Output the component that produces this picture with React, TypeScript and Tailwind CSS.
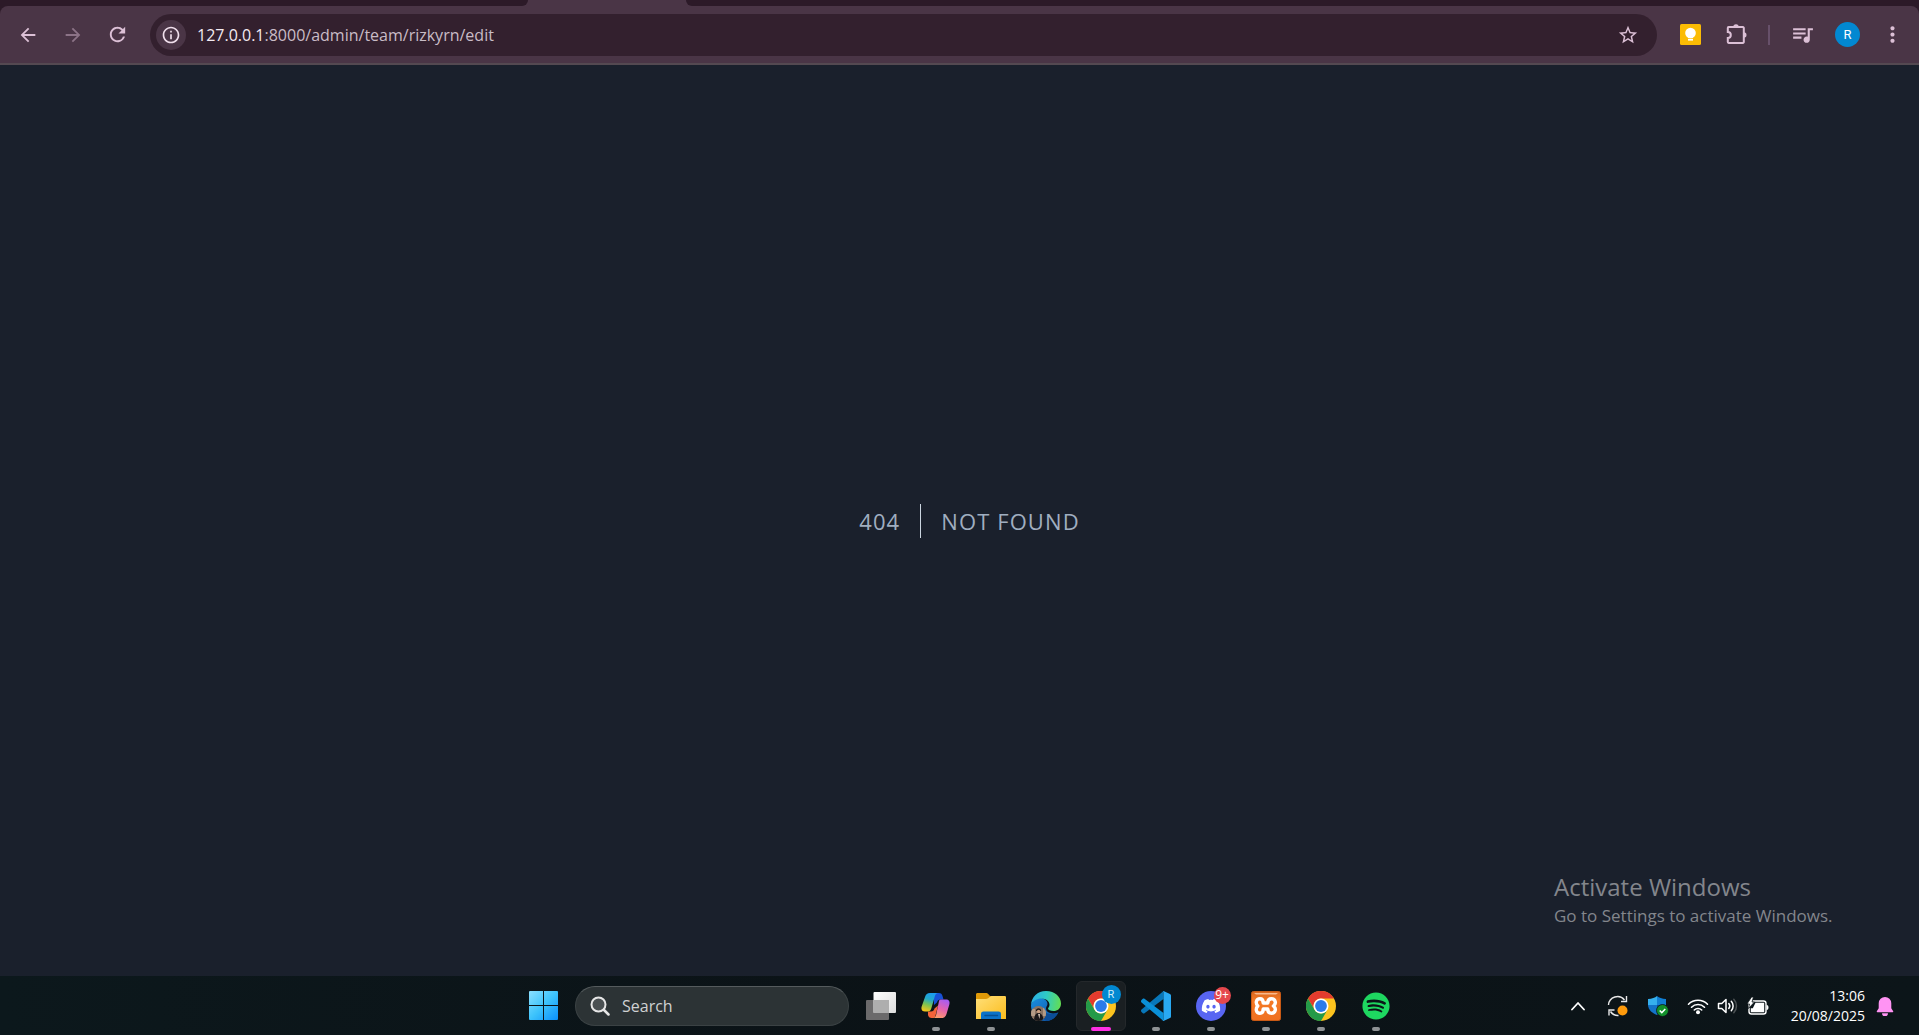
import type { ReactNode } from "react";
import { MdArrowBack, MdArrowForward, MdRefresh, MdStarBorder, MdInfoOutline, MdQueueMusic, MdMoreVert } from "react-icons/md";
import { FaDiscord, FaSpotify } from "react-icons/fa";

function TabStrip() {
  return (
    <div className="flex h-[6px] bg-[#4a3546]" aria-hidden="true">
      <div className="w-[528px] rounded-br-lg bg-[#2c1a28]" />
      <div className="w-[158px]" />
      <div className="flex-1 rounded-bl-lg bg-[#2c1a28]" />
    </div>
  );
}

function ToolButton({ label, children }: { label: string; children: ReactNode }) {
  return (
    <button type="button" aria-label={label} className="flex size-[37px] items-center justify-center rounded-full text-[#dcc0d6]">
      {children}
    </button>
  );
}

function KeepIcon() {
  return (
    <svg className="size-[21px]" viewBox="0 0 21 21">
      <rect width="21" height="21" rx="1.5" fill="#fbbc04" />
      <circle cx="10.5" cy="9" r="5.3" fill="#fff" />
      <rect x="8" y="12" width="5" height="2" fill="#fff" />
      <rect x="8" y="14.8" width="5" height="1.8" fill="#fff" />
    </svg>
  );
}

function PuzzleIcon() {
  return (
    <svg className="size-[23px]" viewBox="0 0 23 23" fill="none">
      <path
        d="M3.6 4.1H18a.8.8 0 0 1 .8.8v14.2a.8.8 0 0 1-.8.8H3.6a.8.8 0 0 1-.8-.8V15a3 3 0 0 0 0-6V4.900a.8.8 0 0 1 .8-.8Z"
        stroke="currentColor"
        strokeWidth="2"
      />
      <path d="M8.300 4a2.700 2.700 0 0 1 5.400 0ZM18.800 9.300a2.700 2.700 0 0 1 0 5.400Z" fill="currentColor" />
    </svg>
  );
}

function BrowserToolbar() {
  return (
    <div className="bg-[#2c1a28]">
      <nav aria-label="Browser toolbar" className="flex h-[59px] items-center rounded-t-lg border-b-2 border-[#544951] bg-[#4a3546] pr-2 pl-[9px]">
        <div className="flex w-[141px] items-center gap-2">
          <ToolButton label="Back"><MdArrowBack size={22} /></ToolButton>
          <button type="button" disabled aria-label="Forward" className="flex size-[37px] items-center justify-center text-[#8c7387]">
            <MdArrowForward size={22} />
          </button>
          <ToolButton label="Reload"><MdRefresh size={23} /></ToolButton>
        </div>
        <div className="flex h-[42px] flex-1 items-center rounded-full bg-[#33202e] pl-[6px] pr-[11px]">
          <button type="button" aria-label="View site information" className="flex size-[30px] items-center justify-center rounded-full bg-[#4a3546] text-[#f0dfec]">
            <MdInfoOutline size={20} />
          </button>
          <p className="ml-[11px] flex-1 text-[16px] text-[#c9bcc6]">
            <span className="text-[#f3eaf1]">127.0.0.1</span>:8000/admin/team/rizkyrn/edit
          </p>
          <ToolButton label="Bookmark this tab"><MdStarBorder size={22} /></ToolButton>
        </div>
        <div className="flex items-center pl-[15px]">
          <ToolButton label="Google Keep"><KeepIcon /></ToolButton>
          <div className="ml-[9px]"><ToolButton label="Extensions"><PuzzleIcon /></ToolButton></div>
          <span className="ml-[13px] mr-[14px] h-5 w-[2px] bg-[#67506a]" />
          <ToolButton label="Media controls"><MdQueueMusic size={25} /></ToolButton>
          <button type="button" aria-label="Profile" className="mx-[14px] size-[25px] rounded-full bg-[#0288d1] text-center font-[Roboto] text-[13px] leading-[25px] text-white">
            R
          </button>
          <ToolButton label="Menu"><MdMoreVert size={25} /></ToolButton>
        </div>
      </nav>
    </div>
  );
}

function ErrorPage() {
  return (
    <main className="relative flex flex-1 items-center justify-center bg-[#1a202c]">
      <h1 className="flex items-center text-[22px] leading-[34px] text-[#a0aec0]">
        <span className="border-r border-[#cbd5e0] px-5 tracking-wider">404</span>
        <span className="ml-5 tracking-wider">NOT FOUND</span>
      </h1>
      <aside className="absolute right-[80px] bottom-12 w-[285px] text-[#83868c]">
        <p className="text-[24px] leading-[34px]">Activate Windows</p>
        <p className="text-[17px] leading-6">Go to Settings to activate Windows.</p>
      </aside>
    </main>
  );
}

function WindowsLogo() {
  return (
    <svg className="size-[29px]" viewBox="0 0 29 29">
      <defs>
        <linearGradient id="win" x1="0" y1="0" x2="29" y2="29" gradientUnits="userSpaceOnUse">
          <stop stopColor="#8be0ff" />
          <stop offset=".5" stopColor="#3dc3fb" />
          <stop offset="1" stopColor="#0a8ffb" />
        </linearGradient>
      </defs>
      <path fill="url(#win)" d="M1 0h13v14H0V1a1 1 0 0 1 1-1Zm14 0h13a1 1 0 0 1 1 1v13H15V0ZM0 15h14v14H1a1 1 0 0 1-1-1V15Zm15 0h14v13a1 1 0 0 1-1 1H15V15Z" />
    </svg>
  );
}

function TaskViewIcon() {
  return (
    <svg className="size-[30px]" viewBox="0 0 30 30">
      <defs>
        <linearGradient id="tv" x1="0" y1="0" x2="1" y2="1">
          <stop stopColor="#fff" />
          <stop offset="1" stopColor="#dcdcdc" />
        </linearGradient>
      </defs>
      <rect y="9" width="23" height="20" rx="1" fill="#6b6a6b" />
      <rect x="7.500" y="1" width="22.500" height="21" rx="1" fill="url(#tv)" />
      <path d="M7.500 9H23v13H7.500z" fill="#aeaeae" />
    </svg>
  );
}

function CopilotIcon() {
  return (
    <svg className="size-[30px]" viewBox="0 0 30 30">
      <defs>
        <linearGradient id="cpa" x1=".6" y1="0" x2=".3" y2="1">
          <stop stopColor="#1b9bf0" />
          <stop offset=".35" stopColor="#23a9c9" />
          <stop offset=".65" stopColor="#7cc251" />
          <stop offset="1" stopColor="#f5c518" />
        </linearGradient>
        <linearGradient id="cpb" x1=".7" y1="0" x2=".3" y2="1">
          <stop stopColor="#a75cf2" />
          <stop offset=".5" stopColor="#e463ae" />
          <stop offset="1" stopColor="#ff9b68" />
        </linearGradient>
      </defs>
      <path fill="#1850d6" d="M13 2h5c2 0 3 1 3.500 3l1 3.500h-3c-2 0-3 1-3.600 3L13 14Z" />
      <path fill="#f4633a" d="M7 20.500h3c2 0 3-1 3.500-3l3.500-3-2.500 10c-.5 2-1.500 2.500-3 2.500h-1c-2 0-3-1-3.500-3Z" />
      <path fill="url(#cpa)" d="M9 2h8.500c-2 0-3 1-3.600 3l-3.600 12.500c-.6 2-1.600 3-3.500 3H4c-2.800 0-4.100-2-3.400-4.700L4 6c.8-2.700 2.300-4 5-4Z" />
      <path fill="url(#cpb)" d="M19.500 8.500H25c2.800 0 4.100 2 3.400 4.700L25.500 23c-.8 2.700-2.300 4-5 4h-9c2 0 3-1 3.600-3l2.600-12.500c.4-2 .6-3 1.800-3Z" />
    </svg>
  );
}

function FolderIcon() {
  return (
    <svg className="size-[30px]" viewBox="0 0 30 30">
      <defs>
        <linearGradient id="fo" x1="0" y1="0" x2="1" y2="1">
          <stop stopColor="#ffe07a" />
          <stop offset="1" stopColor="#fcbc1c" />
        </linearGradient>
      </defs>
      <path fill="#e09a08" d="M0 3.500C0 2.500.7 2 1.500 2H10c1 0 1.500.3 2 .8L14 5h14c1.300 0 2 .7 2 2v5H0Z" />
      <path fill="url(#fo)" d="M0 8h10c1.500 0 2-.5 2.800-1.200S14.500 5 16 5h12.500c1 0 1.500.6 1.500 1.500V28H0Z" />
      <path fill="#0b72c9" d="M5 28v-5c0-1.700 1-2.500 2.500-2.500h15c1.500 0 2.500.8 2.500 2.500v5Z" />
      <path d="M9 24.500h12.500" stroke="#074f94" strokeWidth="1.500" strokeLinecap="round" />
    </svg>
  );
}

function EdgeIcon() {
  return (
    <svg className="size-[30px]" viewBox="0 0 30 30">
      <defs>
        <linearGradient id="ea" x1="0" y1=".3" x2="1" y2=".4">
          <stop stopColor="#2aaee6" />
          <stop offset=".5" stopColor="#2fcbc5" />
          <stop offset="1" stopColor="#62dd56" />
        </linearGradient>
        <linearGradient id="eb" x1="0" y1="0" x2="1" y2="1">
          <stop stopColor="#1a8fdf" />
          <stop offset="1" stopColor="#0c50a4" />
        </linearGradient>
        <clipPath id="ep"><circle cx="7.500" cy="22.500" r="7.500" /></clipPath>
      </defs>
      <path fill="url(#eb)" d="M0 14C2 8 8 6 12 7.500c4 1.500 5.500 5 3.800 7.500-3 5 3 9.500 11.500 6.500C24.500 27 20 30 14.500 30 6 30 0 23 0 14Z" />
      <path fill="url(#ea)" d="M0 14C.5 6 6.500 0 15 0c9 0 15 6 15 12.500 0 5-3.500 7.500-7.500 7.500-3 0-5.500-1-5.500-2.200 0-1 1.500-1.500 1.500-4 0-3.500-3.500-6.300-8-6.300C6 7.500 1.500 10 0 14Z" />
      <path fill="#0b4d98" d="M11 17c1 5 8 8 16.500 4.500C24.500 27 20 30 15 30c-4-3-5.500-8-4-13Z" />
      <g clipPath="url(#ep)">
        <rect y="15" width="15" height="15" fill="#8a7464" />
        <path d="M0 18h4v7H0zM12 16h3v9h-3z" fill="#b39b86" />
        <path d="M3 30c0-5 1.500-7.500 4-8s5.500 2 5.500 8Z" fill="#191719" />
        <path d="M5 20c-.5-3 5-4 5.200 0Z" fill="#201816" />
        <circle cx="7.600" cy="20.500" r="1.700" fill="#c99e80" />
        <path d="M7 23l1.500 5L9 23Z" fill="#d3c4b7" />
      </g>
    </svg>
  );
}

function ChromeIcon() {
  return (
    <svg className="size-[30px]" viewBox="0 0 30 30">
      <circle cx="15" cy="15" r="15" fill="#fcc31e" />
      <path fill="#e33b2e" d="M15 7.500h13A15 15 0 0 0 2 7.500l6.500 11.250A7.500 7.500 0 0 1 15 7.500Z" />
      <path fill="#249a48" d="M2 7.500a15 15 0 0 0 13 22.500l6.500-11.250a7.500 7.500 0 0 1-13 0Z" />
      <circle cx="15" cy="15" r="7.500" fill="#fff" />
      <circle cx="15" cy="15" r="5.900" fill="#2b7bea" />
    </svg>
  );
}

function CodeIcon() {
  return (
    <svg className="size-[30px]" viewBox="0 0 30 30">
      <path fill="#0877b9" d="M.5 18.500 22.500 0v8L3.500 22.300c-.6.4-1.200.4-1.700 0L.5 21c-.7-.7-.7-1.800 0-2.500Z" />
      <path fill="#0a90d8" d="M.5 11.500 22.500 30v-8L3.500 7.700c-.6-.4-1.200-.4-1.700 0L.5 9c-.7.700-.7 1.800 0 2.500Z" />
      <path fill="#29a9f2" d="M22.500 0 29 3c.7.4 1 .9 1 1.600v20.800c0 .7-.3 1.200-1 1.600l-6.500 3c-.8.300-1.500.1-2-.4 1 .7 2 .1 2-1V1.400c0-1.100-1-1.700-2-1 .5-.5 1.200-.7 2-.4Z" />
    </svg>
  );
}

function DiscordIcon() {
  return (
    <span className="relative flex size-[30px] items-center justify-center rounded-full bg-[#5865f2] text-white">
      <FaDiscord size={20} />
      <span className="absolute -top-[4px] -right-[5px] size-[17px] rounded-full bg-[#e5484d] text-center text-[12px] leading-[16px]">9+</span>
    </span>
  );
}

function XamppIcon() {
  return (
    <svg className="size-[30px]" viewBox="0 0 30 30">
      <defs>
        <linearGradient id="xa" x1="0" y1="0" x2="0" y2="1">
          <stop stopColor="#d8671f" />
          <stop offset=".3" stopColor="#f47a26" />
          <stop offset="1" stopColor="#f07020" />
        </linearGradient>
      </defs>
      <rect x=".5" y=".5" width="29" height="29" rx="2" fill="url(#xa)" stroke="#c95a15" />
      <path d="M3 2h24l-2 1.500H5Z" fill="#f9b98c" />
      <path
        d="M9 7.800c2.200 0 3.200 1.600 3.200 4.200h4.600c0-2.600 1.200-4.200 3.600-4.200 4 0 5.400 4.700 2 7.200 3.400 2.500 2 7.200-2 7.200-2.400 0-3.600-1.600-3.600-4.200h-4.600c0 2.600-1 4.200-3.200 4.200-4 0-4.800-4.500-2.200-7.200-2.600-2.700-1.800-7.200 2.200-7.200Z"
        fill="none"
        stroke="#fff"
        strokeWidth="3.400"
        strokeLinejoin="round"
      />
    </svg>
  );
}

type AppEntry = { name: string; icon: ReactNode; running?: boolean; active?: boolean };

const apps: AppEntry[] = [
  { name: "Task View", icon: <TaskViewIcon /> },
  { name: "Copilot", icon: <CopilotIcon />, running: true },
  { name: "File Explorer", icon: <FolderIcon />, running: true },
  { name: "Microsoft Edge", icon: <EdgeIcon /> },
  {
    name: "Google Chrome, profile R",
    icon: (
      <span className="relative">
        <ChromeIcon />
        <span className="absolute -top-[6px] -right-[5px] size-[19px] rounded-full bg-[#0288d1] text-center font-[Roboto] text-[11px] leading-[19px] text-[#d5edfa]">R</span>
      </span>
    ),
    running: true,
    active: true,
  },
  { name: "Visual Studio Code", icon: <CodeIcon />, running: true },
  { name: "Discord", icon: <DiscordIcon />, running: true },
  { name: "XAMPP", icon: <XamppIcon />, running: true },
  { name: "Google Chrome", icon: <ChromeIcon />, running: true },
  { name: "Spotify", icon: <FaSpotify size={28} className="text-[#1ed760]" />, running: true },
];

function TaskButton({ app }: { app: AppEntry }) {
  return (
    <div className="flex w-[55px] justify-center">
      <button
        type="button"
        aria-label={app.name}
        className={
          app.active
            ? "relative flex size-[50px] items-center justify-center rounded-md border border-[#24282b] bg-[#1a1f22]"
            : "relative flex size-[50px] items-center justify-center"
        }
      >
        {app.icon}
        {app.running && (
          <span
            className={
              app.active
                ? "absolute inset-x-0 -bottom-px mx-auto h-1 w-5 rounded-full bg-[#ff2fe4]"
                : "absolute inset-x-0 bottom-0 mx-auto h-1 w-2 rounded-full bg-[#8e9294]"
            }
          />
        )}
      </button>
    </div>
  );
}

function ChevronUp() {
  return (
    <svg className="h-[10px] w-[14px]" viewBox="0 0 14 10" fill="none" stroke="#fff" strokeWidth="1.800" strokeLinecap="round" strokeLinejoin="round">
      <path d="M1 8.500 7 2l6 6.500" />
    </svg>
  );
}

function SyncIcon() {
  return (
    <svg className="size-[22px]" viewBox="0 0 22 22" fill="none" stroke="#e8e8e8" strokeWidth="1.400">
      <path d="M1.500 10a9 9 0 0 1 16-5M19.500 1v5.500H14M2 20.500V15h5.500M3.500 16.500a9 9 0 0 0 8 4" />
      <circle cx="15.500" cy="15.500" r="5" fill="#ff9b0c" stroke="none" />
    </svg>
  );
}

function ShieldIcon() {
  return (
    <svg className="size-[22px]" viewBox="0 0 22 22">
      <path fill="#35b0ee" d="M10 1C8 2.800 5 3.800 1 4v6h9Z" />
      <path fill="#127fd4" d="M10 1c2 1.800 5 2.800 9 3v6h-9Z" />
      <path fill="#1373c9" d="M1 10h9v10C5 18 1.300 15 1 10Z" />
      <path fill="#0a4d9e" d="M10 10h9c-.3 5-4 8-9 10Z" />
      <circle cx="15.500" cy="15.500" r="6" fill="#12902b" stroke="#0b1418" strokeWidth=".8" />
      <path d="m12.700 15.500 2.100 2.100 3.500-3.700" fill="none" stroke="#fff" strokeWidth="1.500" />
    </svg>
  );
}

function WifiIcon() {
  return (
    <svg className="h-[18px] w-[22px]" viewBox="0 0 22 18" fill="none" stroke="#fff" strokeWidth="1.600" strokeLinecap="round">
      <path d="M1.500 7.200a13.400 13.400 0 0 1 19 0M4.500 10.200a9.200 9.200 0 0 1 13 0M7.300 13a5.200 5.200 0 0 1 7.400 0" />
      <circle cx="11" cy="15.300" r="2" fill="#fff" stroke="none" />
    </svg>
  );
}

function VolumeIcon() {
  return (
    <svg className="h-[18px] w-[22px]" viewBox="0 0 22 18" fill="none" stroke="#fff" strokeWidth="1.500" strokeLinecap="round" strokeLinejoin="round">
      <path d="M1.500 6.500h3.300L9 2.500v13l-4.200-4H1.500ZM11.800 6.500a4 4 0 0 1 0 5M14.300 4.300a7 7 0 0 1 0 9.400" />
      <path d="M16.800 2.200a10 10 0 0 1 0 13.600" stroke="#4c5254" />
    </svg>
  );
}

function BatteryIcon() {
  return (
    <svg className="h-[18px] w-[22px]" viewBox="0 0 22 18">
      <rect x="2" y="4" width="17" height="13" rx="2.500" fill="none" stroke="#fff" strokeWidth="1.400" />
      <path fill="#fff" d="M8.500 5.800H17.200v9.400H3.800v-4h2ZM19.500 8c1.300 0 2 .8 2 2.500s-.7 2.500-2 2.500Z" />
      <path fill="#fff" stroke="#0b1418" strokeWidth=".8" d="M4.500 0 0 7h2.500L1.500 11.500 7.500 5H5L6.500 0Z" />
    </svg>
  );
}

function BellIcon() {
  return (
    <svg className="size-5" viewBox="0 0 20 20" fill="#ff93f3">
      <path d="M10 1a6.300 6.300 0 0 1 6.300 6.300v5l1.900 2.900c.3.500 0 1.100-.6 1.100H2.400c-.6 0-.9-.6-.6-1.100l1.900-2.900v-5A6.300 6.300 0 0 1 10 1ZM7 17.300h6a3 3 0 0 1-6 0Z" />
    </svg>
  );
}

function Taskbar() {
  return (
    <footer className="grid h-[59px] grid-cols-[1fr_auto_1fr] items-center bg-[#0c151a] bg-linear-to-r from-[#0c181c] via-[#0b1216] to-[#0c1519]">
      <div />
      <div className="flex items-center">
        <button type="button" aria-label="Start" className="flex h-[50px] w-[55px] items-center justify-center"><WindowsLogo /></button>
        <label className="mx-1 flex h-10 w-[274px] items-center rounded-full border border-[#3b4244] border-t-[#555b5d] bg-[#2c3335] pl-[14px]">
          <svg className="size-5" viewBox="0 0 20 20" fill="none" stroke="#e6e6e6" strokeWidth="2" strokeLinecap="round">
            <circle cx="8.500" cy="8.500" r="7" fill="#4a5052" />
            <path d="m14 14 4.500 4.500" strokeWidth="2.500" />
          </svg>
          <input type="text" aria-label="Search" placeholder="Search" className="ml-3 w-40 bg-transparent text-[16px] outline-none placeholder:text-[#cfd1d2]" />
        </label>
        {apps.map((app) => <TaskButton key={app.name} app={app} />)}
      </div>
      <div className="flex items-center justify-end pr-6">
        <button type="button" aria-label="Show hidden icons"><ChevronUp /></button>
        <button type="button" aria-label="Windows Update" className="ml-[22px]"><SyncIcon /></button>
        <button type="button" aria-label="Windows Security" className="ml-[18px]"><ShieldIcon /></button>
        <button type="button" aria-label="Network, volume and battery" className="ml-[18px] flex gap-2">
          <WifiIcon />
          <VolumeIcon />
          <BatteryIcon />
        </button>
        <button type="button" aria-label="Clock" className="ml-[22px] text-right text-[14px] leading-5 text-white">
          <span className="block">13:06</span>
          <span className="block">20/08/2025</span>
        </button>
        <button type="button" aria-label="Notifications" className="ml-[10px]"><BellIcon /></button>
      </div>
    </footer>
  );
}

export default function App() {
  return (
    <div className="flex min-h-screen flex-col font-['Open_Sans','Noto_Sans',sans-serif]">
      <TabStrip />
      <BrowserToolbar />
      <ErrorPage />
      <Taskbar />
    </div>
  );
}
